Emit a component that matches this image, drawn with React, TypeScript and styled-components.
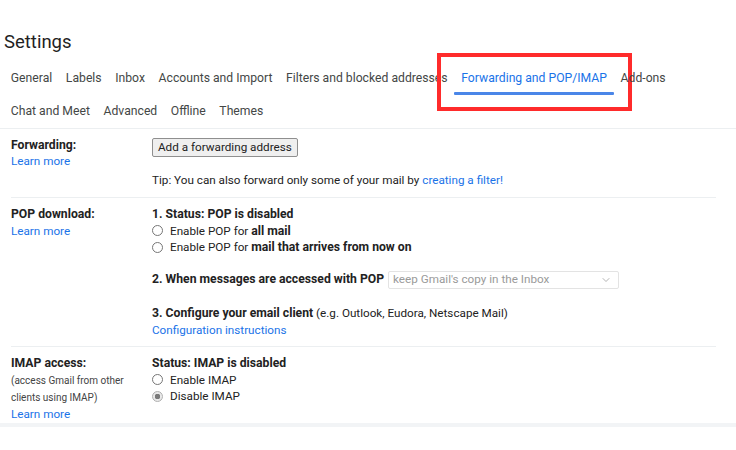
import React from 'react';
import styled, { createGlobalStyle } from 'styled-components';
import { ChevronDown } from 'lucide-react';

const GlobalStyle = createGlobalStyle`
  html, body {
    margin: 0;
    padding: 0;
    background: #fff;
  }
  body {
    font-family: Roboto, "Liberation Sans", Arial, sans-serif;
    color: #222;
  }
`;

const Page = styled.div`
  width: 736px;
  height: 450px;
  overflow: hidden;
  background: #fff;
`;

const Title = styled.h1`
  margin: 28px 0 0;
  padding-left: 4px;
  font-size: 18.5px;
  line-height: 28px;
  font-weight: 400;
  color: #1f1f1f;
`;

const TabBar = styled.nav`
  margin-top: 5.5px;
  padding-left: 4px;
  border-bottom: 1px solid #eceff1;
`;

const TabRow = styled.div`
  display: flex;
`;

const Tab = styled.div<{ $active?: boolean }>`
  position: relative;
  height: 33px;
  padding: 0 6.8px;
  display: flex;
  align-items: center;
  font-size: 12.2px;
  white-space: nowrap;
  color: ${(p) => (p.$active ? '#1a73e8' : '#444746')};

  &::after {
    content: '';
    display: ${(p) => (p.$active ? 'block' : 'none')};
    position: absolute;
    left: 0;
    right: 0;
    bottom: 0;
    height: 3px;
    background: #4a86e8;
    border-radius: 1px;
  }
`;

const Highlight = styled.span`
  position: absolute;
  left: -17px;
  right: -18px;
  top: -8.5px;
  bottom: -16.5px;
  border: 4px solid #ff2b2b;
  pointer-events: none;
`;

const Settings = styled.div`
  padding: 0 20px 0 11px;
`;

const Section = styled.section<{ $bottom?: number; $last?: boolean }>`
  display: grid;
  grid-template-columns: 141px 1fr;
  padding: 8px 0 ${(p) => p.$bottom ?? 8}px;
  border-bottom: ${(p) => (p.$last ? 'none' : '1px solid #eceff1')};
  font-size: 11.7px;
  line-height: 16.5px;
`;

const LabelCol = styled.div`
  display: flex;
  flex-direction: column;
`;

const Label = styled.div`
  font-weight: 700;
  font-size: 12.2px;
  color: #222;
`;

const Note = styled.div`
  font-size: 10px;
  line-height: 17px;
  color: #444;
`;

const Link = styled.a`
  color: #1a73e8;
  text-decoration: none;
  cursor: pointer;
`;

const Body = styled.div`
  display: flex;
  flex-direction: column;
  align-items: flex-start;
`;

const Button = styled.button`
  margin-top: 1px;
  height: 19px;
  padding: 0 5px;
  font-family: inherit;
  font-size: 11.7px;
  line-height: 17px;
  color: #222;
  background: #efefef;
  border: 1px solid #8f8f8f;
  border-radius: 2px;
`;

const Line = styled.div<{ $gap?: number }>`
  margin-top: ${(p) => p.$gap ?? 0}px;
  color: #222;
`;

const Bold = styled.b`
  font-weight: 700;
  font-size: 12.2px;
`;

const RadioRow = styled.label`
  display: flex;
  align-items: center;
  gap: 7px;
  color: #222;
`;

const RadioDot = styled.span<{ $checked?: boolean }>`
  width: 9px;
  height: 9px;
  border-radius: 50%;
  border: 1px solid ${(p) => (p.$checked ? '#b0b0b0' : '#767676')};
  background: ${(p) =>
    p.$checked ? 'radial-gradient(circle, #7a7a7a 0 2.6px, #e8e8e8 3px)' : '#fff'};
  flex: none;
`;

const SelectRow = styled.div`
  margin-top: 15px;
  display: flex;
  align-items: center;
  gap: 4px;
`;

const Select = styled.div`
  width: 231px;
  height: 18px;
  box-sizing: border-box;
  padding: 0 6px 0 4px;
  display: flex;
  align-items: center;
  justify-content: space-between;
  border: 1px solid #e3e3e3;
  border-radius: 2px;
  color: #9a9a9a;
  font-size: 11.7px;
`;

const BottomBand = styled.div`
  height: 4px;
  margin-top: 0.5px;
  background: #f2f4f6;
`;

const Radio: React.FC<{ checked?: boolean; children: React.ReactNode }> = ({ checked, children }) => (
  <RadioRow>
    <RadioDot $checked={checked} />
    <span>{children}</span>
  </RadioRow>
);

const tabsTop = ['General', 'Labels', 'Inbox', 'Accounts and Import', 'Filters and blocked addresses', 'Forwarding and POP/IMAP', 'Add-ons'];
const tabsBottom = ['Chat and Meet', 'Advanced', 'Offline', 'Themes'];
const activeTab = 'Forwarding and POP/IMAP';

const App: React.FC = () => (
  <Page>
    <GlobalStyle />
    <Title>Settings</Title>
    <TabBar>
      <TabRow>
        {tabsTop.map((t) => (
          <Tab key={t} $active={t === activeTab}>
            {t}
            {t === activeTab && <Highlight />}
          </Tab>
        ))}
      </TabRow>
      <TabRow>
        {tabsBottom.map((t) => (
          <Tab key={t}>{t}</Tab>
        ))}
      </TabRow>
    </TabBar>

    <Settings>
      <Section $bottom={9}>
        <LabelCol>
          <Label>Forwarding:</Label>
          <Link>Learn more</Link>
        </LabelCol>
        <Body>
          <Button>Add a forwarding address</Button>
          <Line $gap={15}>
            Tip: You can also forward only some of your mail by <Link>creating a filter!</Link>
          </Line>
        </Body>
      </Section>

      <Section>
        <LabelCol>
          <Label>POP download:</Label>
          <Link>Learn more</Link>
        </LabelCol>
        <Body>
          <Line>
            <Bold>1. Status: POP is disabled</Bold>
          </Line>
          <Radio>
            Enable POP for <Bold>all mail</Bold>
          </Radio>
          <Radio>
            Enable POP for <Bold>mail that arrives from now on</Bold>
          </Radio>
          <SelectRow>
            <Bold>2. When messages are accessed with POP</Bold>
            <Select>
              <span>keep Gmail's copy in the Inbox</span>
              <ChevronDown size={12} strokeWidth={1.5} color="#9a9a9a" />
            </Select>
          </SelectRow>
          <Line $gap={16.5}>
            <Bold>3. Configure your email client</Bold> (e.g. Outlook, Eudora, Netscape Mail)
          </Line>
          <Link>Configuration instructions</Link>
        </Body>
      </Section>

      <Section $bottom={0} $last>
        <LabelCol>
          <Label>IMAP access:</Label>
          <Note>(access Gmail from other</Note>
          <Note>clients using IMAP)</Note>
          <Link>Learn more</Link>
        </LabelCol>
        <Body>
          <Line>
            <Bold>Status: IMAP is disabled</Bold>
          </Line>
          <Radio>Enable IMAP</Radio>
          <Radio checked>Disable IMAP</Radio>
        </Body>
      </Section>
    </Settings>
    <BottomBand />
  </Page>
);

export default App;
